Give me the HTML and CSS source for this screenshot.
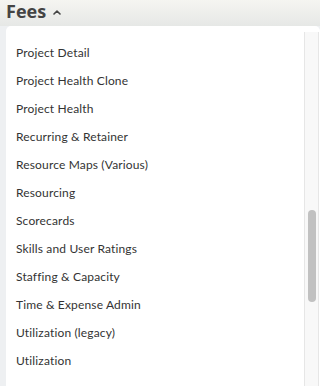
FILE: index.html
```html
<!DOCTYPE html>
<html lang="en">
  <head>
    <meta charset="UTF-8" />
    <title>Fees</title>
    <link rel="stylesheet" href="styles.css">
  </head>
  <body>
    <div class="header">
      <span class="title">Fees</span>
      <svg class="chevron" width="8" height="6" viewBox="0 0 8 6">
        <path d="M1 5 L4 2 L7 5" fill="none" stroke="#444" stroke-width="1.6" stroke-linecap="round" stroke-linejoin="round" />
      </svg>
    </div>
    <div class="menu">
      <ul class="list">
        <li>Project Detail</li>
        <li>Project Health Clone</li>
        <li>Project Health</li>
        <li>Recurring &amp; Retainer</li>
        <li>Resource Maps (Various)</li>
        <li>Resourcing</li>
        <li>Scorecards</li>
        <li>Skills and User Ratings</li>
        <li>Staffing &amp; Capacity</li>
        <li>Time &amp; Expense Admin</li>
        <li>Utilization (legacy)</li>
        <li>Utilization</li>
      </ul>
      <div class="track">
        <div class="thumb"></div>
      </div>
    </div>
  </body>
</html>
```

FILE: styles.css
```css
html,
body {
  margin: 0;
  height: 100%;
  overflow: hidden;
}
body {
  font-family: Lato, "Open Sans", sans-serif;
  background: #eef0f2;
  color: #333;
}

.header {
  height: 26px;
  display: flex;
  align-items: center;
  gap: 7px;
  padding: 0 6px;
  background: linear-gradient(#f5f5f1, #e6e8e6);
}
.title {
  font-family: "Open Sans", sans-serif;
  font-size: 18px;
  font-weight: bold;
  color: #444;
  margin-top: -4px;
}
.chevron {
  margin-top: -3px;
}

.menu {
  margin-left: 6px;
  height: 360px;
  background: #fff;
  border-radius: 5px 5px 0 0;
  display: flex;
}

.list {
  list-style: none;
  margin: 0;
  padding: 19px 0 0 10px;
  flex: 1;
}
.list li {
  height: 28px;
  font-size: 12px;
  color: #333;
  letter-spacing: 0.15px;
}

.track {
  width: 13px;
  margin: 6px 1px 0 0;
  background: #f8f8f8;
  border-left: 1px solid #e6e6e6;
  border-right: 1px solid #e6e6e6;
  position: relative;
}
.thumb {
  position: absolute;
  top: 178px;
  left: 3px;
  width: 8px;
  height: 92px;
  border-radius: 4px;
  background: #c1c1c1;
}
```
